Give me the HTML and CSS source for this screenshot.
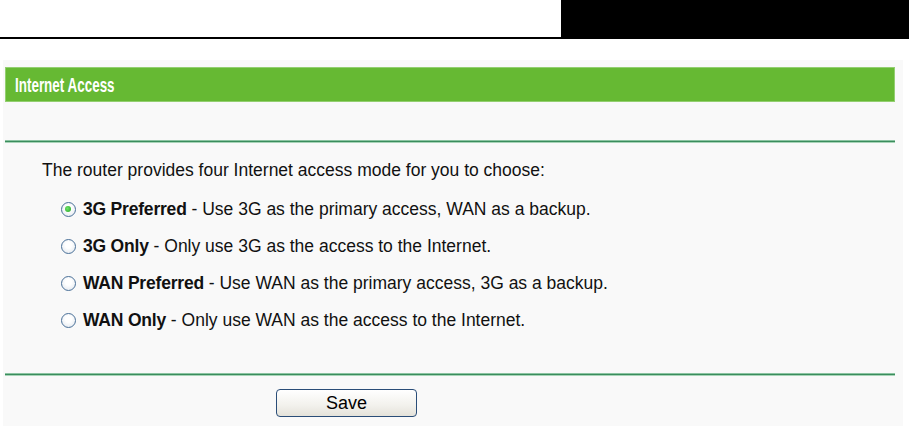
FILE: index.html
```html
<!DOCTYPE html>
<html lang="en">
<head>
    <meta charset="UTF-8">
    <title>Internet Access</title>
    <link rel="stylesheet" href="styles.css">
</head>
<body>
    <div class="topbar">
        <div class="topbar-left"></div>
        <div class="topbar-right"></div>
    </div>
    <div class="panel">
        <div class="panel-title"><span class="title-text">Internet Access</span></div>
        <div class="rule"></div>
        <p class="intro">The router provides four Internet access mode for you to choose:</p>
        <form class="options">
            <label class="option">
                <input type="radio" class="radio" name="mode" value="3g-preferred" checked>
                <span><b>3G Preferred</b> - Use 3G as the primary access, WAN as a backup.</span>
            </label>
            <label class="option">
                <input type="radio" class="radio" name="mode" value="3g-only">
                <span><b>3G Only</b> - Only use 3G as the access to the Internet.</span>
            </label>
            <label class="option">
                <input type="radio" class="radio" name="mode" value="wan-preferred">
                <span><b>WAN Preferred</b> - Use WAN as the primary access, 3G as a backup.</span>
            </label>
            <label class="option">
                <input type="radio" class="radio" name="mode" value="wan-only">
                <span><b>WAN Only</b> - Only use WAN as the access to the Internet.</span>
            </label>
        </form>
        <div class="rule rule-bottom"></div>
        <div class="actions">
            <button type="button" class="save-btn">Save</button>
        </div>
    </div>
</body>
</html>
```

FILE: styles.css
```css
body {
    margin: 0;
    padding: 0;
    background-color: #fff;
    font-family: "Liberation Sans", Arial, sans-serif;
    font-size: 17.5px;
    color: #111;
}
.topbar {
    display: flex;
    height: 39px;
}
.topbar-left {
    flex: 1;
    border-bottom: 2px solid #000;
}
.topbar-right {
    width: 348px;
    background-color: #000;
}
.panel {
    margin: 21px 6px 0 3px;
    padding: 7px 8px 0 2px;
    background-color: #f9f9f9;
    min-height: 366px;
    box-sizing: border-box;
}
.panel-title {
    height: 33px;
    line-height: 34px;
    padding-left: 9px;
    background-color: #66b933;
    border: 1px solid #93cf70;
    color: #fff;
    font-weight: bold;
    font-size: 21px;
    overflow: hidden;
}
.title-text {
    display: inline-block;
    transform: scaleX(0.64);
    transform-origin: left center;
}
.rule {
    margin-top: 38px;
    height: 1px;
    background-color: #3b8d5d;
    border-top: 1px solid #8cc4a2;
    border-bottom: 1px solid #a8d4b8;
}
.intro {
    margin: 17px 0 0 37px;
    line-height: 20px;
}
.options {
    display: flex;
    flex-direction: column;
    padding: 11px 0 0 56px;
}
.option {
    display: flex;
    align-items: center;
    height: 37px;
    gap: 7px;
}
.option b {
    letter-spacing: -0.2px;
}
.radio {
    appearance: none;
    margin: 0;
    width: 15px;
    height: 15px;
    border-radius: 50%;
    border: 1.5px solid #4a7098;
    background: radial-gradient(circle at 50% 40%, #ffffff 30%, #dde4ec 100%);
    box-sizing: border-box;
    position: relative;
}
.radio:checked::after {
    content: "";
    position: absolute;
    left: 3px;
    top: 3px;
    width: 6px;
    height: 6px;
    border-radius: 50%;
    background: radial-gradient(circle at 40% 40%, #6fe36a, #22a322);
}
.rule-bottom {
    margin-top: 34px;
}
.actions {
    padding: 13px 0 0 271px;
}
.save-btn {
    width: 141px;
    height: 28px;
    border: 1px solid #2a4d78;
    border-radius: 4px;
    background: linear-gradient(#ffffff, #f2f1ec 60%, #e4e2da);
    font-family: "Liberation Sans", Arial, sans-serif;
    font-size: 18px;
    color: #000;
    padding: 0;
    cursor: pointer;
}
```
